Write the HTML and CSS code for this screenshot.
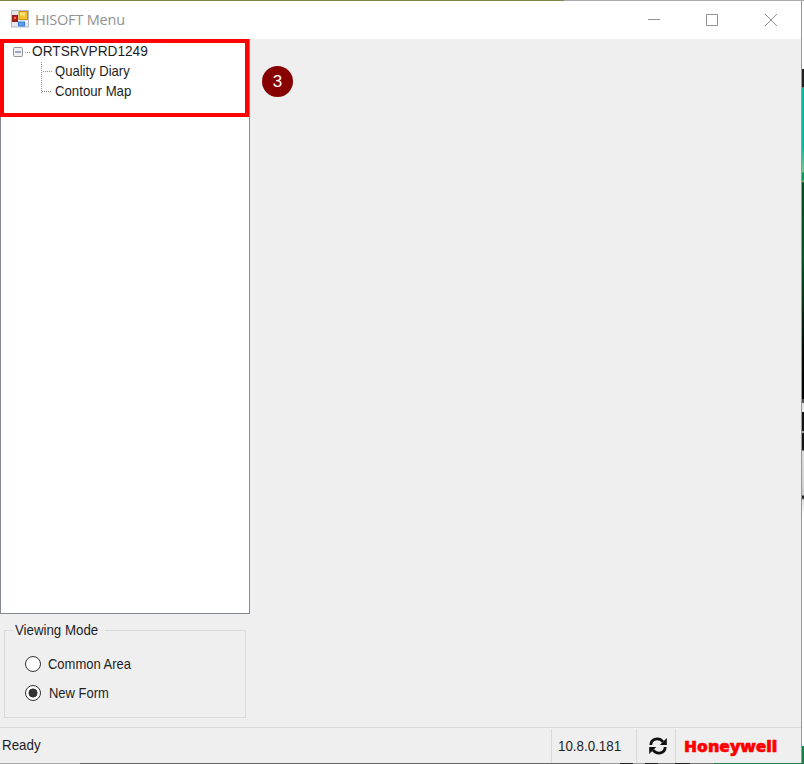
FILE: index.html
```html
<!DOCTYPE html>
<html lang="en">
<head>
<meta charset="utf-8">
<title>HISOFT Menu</title>
<link rel="stylesheet" href="styles.css">
</head>
<body>
<div class="desktop">
  <main class="window">
    <header class="titlebar">
      <svg class="app-icon" width="18" height="18" viewBox="0 0 18 18">
        <rect x=".5" y=".5" width="17" height="16.5" fill="#e4e7ee" stroke="#b5bac5"/>
        <path d="M7.5 1v16M1 11.5h16" stroke="#fff"/>
        <rect x="1.5" y="5.5" width="5" height="6" fill="#b81c12" stroke="#8d2018"/>
        <rect x="3" y="7" width="2" height="2" fill="#ec7267"/>
        <rect x="8" y="1.5" width="8.5" height="8" fill="#f3c42d" stroke="#c9920e"/>
        <rect x="9" y="2.5" width="5" height="3" fill="#fbe27b"/>
        <rect x="7.5" y="12" width="6" height="4" fill="#5c9cf1" stroke="#3978d5"/>
      </svg>
      <h1 class="title">HISOFT Menu</h1>
      <svg class="controls" width="132" height="14" viewBox="0 0 132 14" fill="none" stroke="#929292">
        <path d="M0 6.5h12M58.500 1.500h11v11h-11z"/>
        <path d="M117 1l12 12M129 1l-12 12"/>
      </svg>
    </header>
    <section class="content">
      <aside class="sidebar">
        <nav class="tree">
          <svg class="branches" width="54" height="60" viewBox="0 0 54 60" fill="none">
            <rect x="12.500" y="7.500" width="9" height="9" rx="1" fill="#f0f0f0" stroke="#929292"/>
            <path d="M14 12h6" stroke="#4865a5"/>
            <path d="M24 12.500h5M40.500 22v31M42 31.500h9M41 51.500h10" stroke="#909090" stroke-dasharray="1 1"/>
          </svg>
          <div class="node root"><span>ORTSRVPRD1249</span></div>
          <div class="node diary"><span>Quality Diary</span></div>
          <div class="node map"><span>Contour Map</span></div>
          <div class="highlight"></div>
        </nav>
        <fieldset class="mode">
          <legend><span>Viewing Mode</span></legend>
          <label class="option common"><i class="radio"></i><span>Common Area</span></label>
          <label class="option form"><i class="radio on"></i><span>New Form</span></label>
        </fieldset>
      </aside>
      <div class="workspace"><div class="step"><span>3</span></div></div>
    </section>
    <footer class="status">
      <div class="ready"><span>Ready</span></div>
      <div class="address"><span>10.8.0.181</span></div>
      <div class="refresh">
        <svg width="18" height="18" viewBox="0 0 18 18" fill="none" stroke="#111" stroke-width="2.800">
          <path d="M1.800 8C2 1.500 10 0 14 4.800M16.200 10C16 16.500 8 18 4 13.200"/>
          <path d="M17.800 1v7h-7zM.2 17v-7h7z" fill="#111" stroke="none"/>
        </svg>
      </div>
      <div class="brand"><span>Honeywell</span></div>
    </footer>
  </main>
</div>
</body>
</html>
```
FILE: styles.css
```css
* { box-sizing: border-box; }
body { margin: 0; font: 15px/20px "Liberation Sans", Arial, sans-serif; color: #1d1d25; }
span { display: inline-block; white-space: nowrap; transform-origin: left center; }
.desktop {
  width: 804px; height: 764px; overflow: hidden; padding: 1px 2px 1px 0;
  background:
    linear-gradient(90deg, #78884b 564px, #aaa 564px) 0 0 / 100% 1px no-repeat,
    linear-gradient(90deg, #aaa 80px, #666 80px 600px, #999 600px 620px, #222 620px 633px, #999 633px 645px, #222 645px 658px, #777 658px 675px, #222 675px 690px, #777 690px 714px, #287c4c 714px) 0 100% / 100% 1px no-repeat,
    linear-gradient(#fff 69px, #202020 69px 87px, #777 87px 88px, #08b8a5 88px 145px, #79c58a 172px, #079b58 173px 180px, #a4bd70 181px, #064d20 183px, #075323 260px, #020b05 350px, #000 399px, #555 399px 403px, #e5e5e5 403px 412px, #151515 412px 431px, #aaa 431px 433px, #151515 433px 450px, #ddd 451px, #ccc 495px, #222 496px 498px, #ddd 500px, #fff 515px 746px, #168348 746px);
}
.window { width: 802px; height: 762px; display: flex; flex-direction: column; background: #efefef; border-right: 1px solid #989898; }
.titlebar { height: 38px; flex: none; display: flex; align-items: center; padding: 0 24px 0 11px; background: #fff; color: #929292; }
.app-icon { margin-top: -2px; }
.title { margin: -2px 0 0 6px; font: 15px/20px "Open Sans", sans-serif; white-space: nowrap; letter-spacing: -.25px; transform: scaleX(.97); transform-origin: left; }
.controls { margin: 0 -3px 0 auto; }
.content { display: flex; height: 688px; flex: none; }
.sidebar { width: 250px; flex: none; }
.tree { position: relative; height: 575px; padding-top: 1px; background: #fff; border: 1px solid #858991; }
.branches { position: absolute; left: 0; top: 0; }
.node { height: 20px; padding-left: 54px; }
.root { padding-left: 31px; }
.root span { transform: scaleX(.912); }
.diary span { transform: scaleX(.87); }
.map span { transform: scaleX(.88); }
.highlight { position: absolute; left: -1px; top: -1px; width: 249px; height: 78px; border: 4px solid red; }
.mode { position: relative; width: 242px; height: 98px; margin: 6px 0 0 4px; padding: 9px 0 0 20px; border: 1px solid #dadada; min-width: 0; }
.mode legend { width: 92px; height: 20px; margin-left: -12px; padding: 0 2px; }
.mode legend span { transform: scaleX(.885); }
.option { display: flex; align-items: center; height: 29px; gap: 7px; }
.option span { transform: scaleX(.865); }
.form span { margin-left: 1px; }
.radio { width: 16px; height: 16px; border: 1px solid #333; border-radius: 50%; background: #fff; }
.radio.on { background: radial-gradient(circle, #333 0 4.200px, #fff 4.800px); }
.workspace { flex: 1; padding: 27px 0 0 12px; }
.step { width: 31px; height: 31px; display: grid; place-items: center; border-radius: 50%; background: #870000; color: #fff; font: 17px/20px "Liberation Sans", sans-serif; }
.status { display: flex; height: 36px; border-top: 1px solid #d9d9d9; }
.status > div { display: flex; align-items: center; padding-bottom: 1px; }
.ready { width: 551px; padding-left: 2px; }
.ready span { transform: scaleX(.89); }
.status .address, .status .refresh, .status .brand { height: 34px; margin-top: 1px; border-left: 1px solid #d9d9d9; }
.address { width: 85px; padding-left: 6px; }
.address span { transform: scaleX(.89); }
.refresh { width: 39px; padding-left: 12px; }
.brand { padding-left: 8px; color: red; font: 900 15.500px/20px "Open Sans", sans-serif; }
.brand span { -webkit-text-stroke: .5px red; transform: scaleX(1.1); }
```
